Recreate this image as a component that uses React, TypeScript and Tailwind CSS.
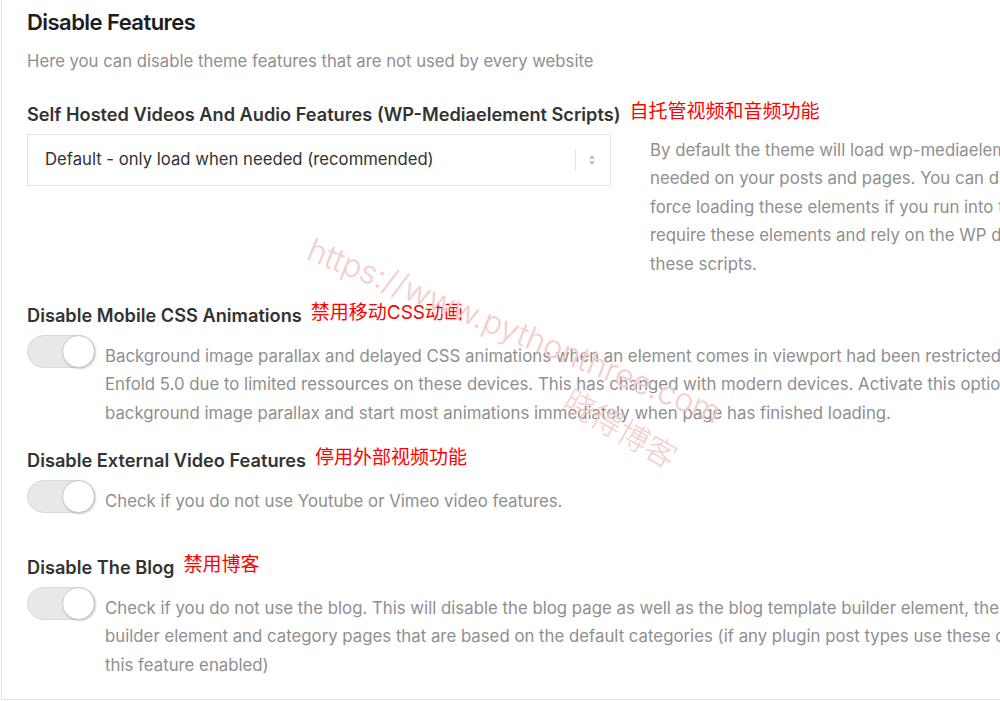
const cjk = { fontFamily: 'Inter, "Noto Sans CJK SC", sans-serif' };

function Toggle() {
  return (
    <div className="relative h-[33px] w-[68px] shrink-0 rounded-full border border-[#d9d9d9] bg-[#e8e8e8]">
      <div className="absolute -right-px -top-px h-[33px] w-[33px] rounded-full border border-[#c8c8c8] bg-white shadow-[1px_1px_2px_rgba(0,0,0,0.2)]" />
    </div>
  );
}

function Lines({ lines }: { lines: string[] }) {
  return (
    <div className="text-[16.8px] leading-[28.5px] text-[#8f8f8f]">
      {lines.map((l) => (
        <div key={l} className="whitespace-nowrap">
          {l}
        </div>
      ))}
    </div>
  );
}

function Label({ en, zh }: { en: string; zh: string }) {
  return (
    <div className="flex items-baseline gap-[9px] whitespace-nowrap">
      <span className="text-[18.2px] font-semibold text-[#333]">{en}</span>
      <span className="relative -top-[3px] text-[19px] text-[#ff0000]">{zh}</span>
    </div>
  );
}

function ToggleRow({ en, zh, lines }: { en: string; zh: string; lines: string[] }) {
  return (
    <div>
      <Label en={en} zh={zh} />
      <div className="mt-[11px] flex gap-[10px]">
        <div className="-mt-[7px]">
          <Toggle />
        </div>
        <Lines lines={lines} />
      </div>
    </div>
  );
}

export default function App() {
  return (
    <div className="relative h-[701px] w-[1000px] overflow-hidden bg-white" style={cjk}>
      <div className="ml-[1px] h-[700px] w-[1100px] border-b border-l border-[#e2e2e2] pl-[25px] pt-[6px]">
        <h1 className="text-[22px] font-semibold tracking-tight text-[#1d1d1d]">Disable Features</h1>
        <p className="mt-[10px] text-[16.7px] text-[#8f8f8f]">
          Here you can disable theme features that are not used by every website
        </p>

        <div className="mt-[27px]">
          <Label en="Self Hosted Videos And Audio Features (WP-Mediaelement Scripts)" zh="自托管视频和音频功能" />
          <div className="mt-[4px] flex gap-[39px]">
            <div className="flex h-[52px] w-[584px] shrink-0 items-center border border-[#e3e3e3] bg-white pl-[17px] pr-[14px]">
              <span className="flex-1 text-[16.7px] text-[#333]">Default - only load when needed (recommended)</span>
              <div className="mr-[12px] h-[20px] w-px bg-[#e3e3e3]" />
              <svg width="8" height="12" viewBox="0 0 8 12" className="text-[#b0b0b0]">
                <path d="M1 4.5 L4 1.5 L7 4.5 Z M1 7.5 L4 10.5 L7 7.5 Z" fill="currentColor" />
              </svg>
            </div>
            <div className="mt-[2px]">
              <Lines
                lines={[
                  'By default the theme will load wp-mediaelement scripts only when',
                  'needed on your posts and pages. You can disable them completely or',
                  'force loading these elements if you run into trouble with plugins that',
                  'require these elements and rely on the WP default behaviour to load',
                  'these scripts.',
                ]}
              />
            </div>
          </div>
        </div>

        <div className="mt-[24px] flex flex-col gap-[20px]">
          <ToggleRow
            en="Disable Mobile CSS Animations"
            zh="禁用移动CSS动画"
            lines={[
              'Background image parallax and delayed CSS animations when an element comes in viewport had been restricted on mobile devices since',
              'Enfold 5.0 due to limited ressources on these devices. This has changed with modern devices. Activate this option to disable',
              'background image parallax and start most animations immediately when page has finished loading.',
            ]}
          />
          <ToggleRow
            en="Disable External Video Features"
            zh="停用外部视频功能"
            lines={['Check if you do not use Youtube or Vimeo video features.']}
          />
          <div className="mt-[19px]">
            <ToggleRow
              en="Disable The Blog"
              zh="禁用博客"
              lines={[
                'Check if you do not use the blog. This will disable the blog page as well as the blog template builder element, the blog post',
                'builder element and category pages that are based on the default categories (if any plugin post types use these categories leave',
                'this feature enabled)',
              ]}
            />
          </div>
        </div>
      </div>

      {/* watermark */}
      <div className="pointer-events-none absolute left-[318px] top-[226px] origin-top-left rotate-[22deg] whitespace-nowrap text-[32px] font-light text-[#f6cccc]">
        https://www.pythonthree.com
      </div>
      <div className="pointer-events-none absolute left-[578px] top-[378px] origin-top-left rotate-[30deg] whitespace-nowrap text-[31px] font-light text-[#f6cccc]">
        晓得博客
      </div>
    </div>
  );
}
